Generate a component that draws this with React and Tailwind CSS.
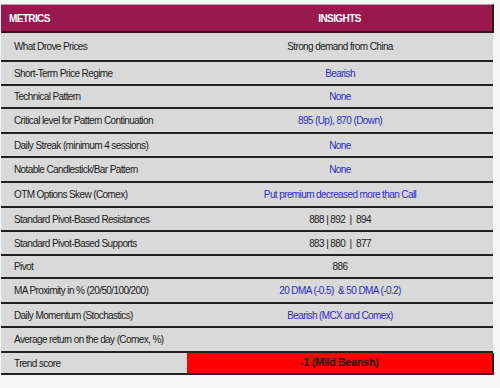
export default function App() {
  const rows = [
    ["What Drove Prices", "Strong demand from China", "black", 29],
    ["Short-Term Price Regime", "Bearish", "blue", 24],
    ["Technical Pattern", "None", "blue", 23],
    ["Critical level for Pattern Continuation", "895 (Up), 870 (Down)", "blue", 25],
    ["Daily Streak (minimum 4 sessions)", "None", "blue", 24],
    ["Notable Candlestick/Bar Pattern", "None", "blue", 25],
    ["OTM Options Skew (Comex)", "Put premium decreased more than Call", "blue", 25],
    ["Standard Pivot-Based Resistances", "888 | 892  |  894", "black", 24],
    ["Standard Pivot-Based Supports", "883 | 880  |  877", "black", 24],
    ["Pivot", "886", "black", 23],
    ["MA Proximity in % (20/50/100/200)", "20 DMA (-0.5)  & 50 DMA (-0.2)", "blue", 25],
    ["Daily Momentum (Stochastics)", "Bearish (MCX and Comex)", "blue", 24],
    ["Average return on the day (Comex, %)", "", "black", 25],
  ];
  return (
    <div className="w-[500px] h-[388px] bg-[#f6f6f6] pt-[4px] pl-[1px]" style={{ fontFamily: '"Liberation Sans", Arial, sans-serif' }}>
      <div className="w-[493px]">
        <div className="flex h-[29px] bg-[#98174c] border-t border-[#b0a0a8] border-b-2 border-b-[#2a1a1f] border-r-2 border-r-[#2a1a1f] text-white font-bold text-[10px] tracking-[-0.6px]">
          <div className="w-[186px] pl-[8px] flex items-center">METRICS</div>
          <div className="flex-1 flex items-center justify-center">INSIGHTS</div>
        </div>
        {rows.map(([l, r, c, h], i) => (
          <div key={i} className="flex bg-[#d9d9d9] border-b-2 border-[#222] mr-[1px] text-[10px] tracking-[-0.6px]" style={{ height: h }}>
            <div className="w-[186px] pl-[13px] flex items-center text-[#1a1a1a]">{l}</div>
            <div className={"flex-1 flex items-center justify-center whitespace-pre " + (c === "blue" ? "text-[#2b2bc4]" : "text-[#1a1a1a]")}>{r}</div>
          </div>
        ))}
        <div className="flex h-[22px] bg-[#d9d9d9] border-b-2 border-[#222] text-[10px]">
          <div className="w-[186px] pl-[13px] flex items-center text-[#1a1a1a] tracking-[-0.6px]">Trend score</div>
          <div className="flex-1 flex items-center justify-center bg-[#ff0000] border-r-2 border-r-[#2a1a1f] font-bold text-[10.5px] text-[#2a0505] tracking-[-0.2px]">-1 (Mild Bearish)</div>
        </div>
      </div>
    </div>
  );
}
